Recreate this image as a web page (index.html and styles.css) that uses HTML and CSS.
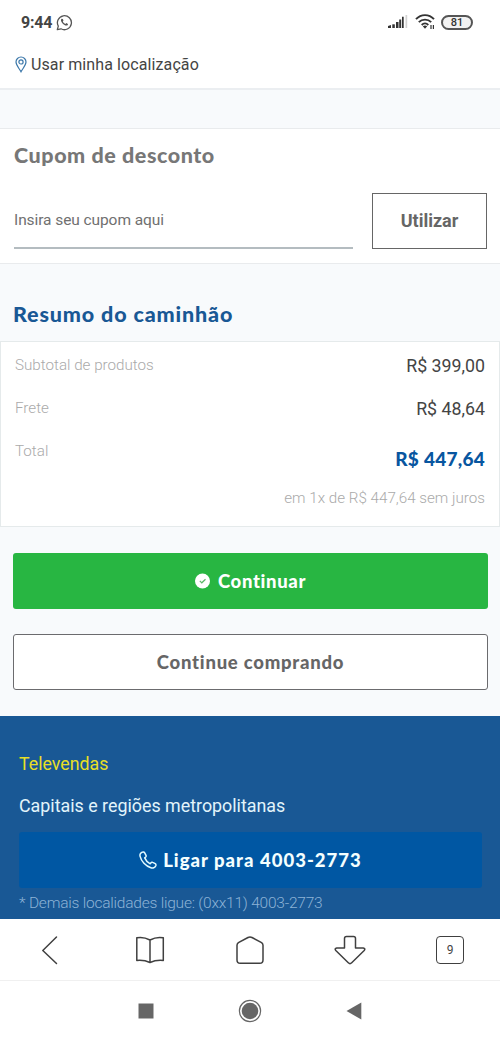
FILE: index.html
```html
<!DOCTYPE html>
<html lang="pt-BR">
<head>
<meta charset="utf-8">
<title>Resumo do caminhão</title>
<link rel="stylesheet" href="styles.css">
</head>
<body>
<div class="screen">
  <header class="status">
    <div class="status-left">
      <span class="clock">9:44</span>
      <svg width="17" height="17" viewBox="0 0 17 17" fill="none" stroke="#555" stroke-width="1.3">
        <path d="M1.3 15.7l1-3.6A7 7 0 1 1 5 14.8z" stroke-linejoin="round"/>
        <path d="M5.6 4.8c-1 .8-.8 2.300.4 3.900 1.500 2 3.800 3.300 5.100 2.700.8-.4 1-1.200.8-1.500l-1.600-.8-.9.9c-1-.3-2.200-1.500-2.600-2.500l.7-.9-.7-1.700z" fill="#555" stroke="none"/>
      </svg>
    </div>
    <div class="status-right">
      <svg class="signal" width="20" height="14" viewBox="0 0 20 14">
        <g fill="#333"><path d="M0 13v-2l3-1v3z"/><path d="M4.300 9.300h2.500V13H4.300z"/><path d="M8 7h2.500v6H8z"/><path d="M11.200 4.500h2V13h-2z"/><path d="M14 1.800h1.700V13H14z"/></g>
        <path d="M17.500 0h1.700v13h-1.700z" fill="#d2d2d2"/>
      </svg>
      <svg class="wifi" width="20" height="16" viewBox="0 0 20 16" fill="none" stroke="#333" stroke-width="1.900">
        <path d="M1 5.200C6-.3 14-.3 19 5.200M3.800 8.200c3.400-3.500 9-3.500 12.400 0M6.700 11c2-2 4.600-2 6.600 0"/>
        <path d="M7.800 12.300q2.200-1.500 4.400 0L10 14.700z" fill="#333" stroke="none"/>
        <path d="M16 11v4M18.400 11v4" stroke-width="1.200"/>
      </svg>
      <span class="battery">81</span>
    </div>
  </header>

  <div class="location">
    <svg width="12" height="17" viewBox="0 0 12 17" fill="none" stroke="#3c78aa" stroke-width="1.200">
      <path d="M6 15.800C4 12 1 9.200 1 6a5 5 0 0 1 10 0c0 3.200-3 6-5 9.800z"/><circle cx="6" cy="5.900" r="2.100"/>
    </svg>
    <span class="location-text">Usar minha localização</span>
  </div>

  <section class="coupon">
    <h2 class="title coupon-title">Cupom de desconto</h2>
    <div class="coupon-form">
      <div class="coupon-field">Insira seu cupom aqui</div>
      <div class="coupon-button">Utilizar</div>
    </div>
  </section>

  <h2 class="title summary-title">Resumo do caminhão</h2>
  <section class="summary">
    <div class="row"><span class="label">Subtotal de produtos</span><span class="value">R$ 399,00</span></div>
    <div class="row"><span class="label">Frete</span><span class="value">R$ 48,64</span></div>
    <div class="row"><span class="label">Total</span><span class="total">R$ 447,64</span></div>
    <div class="row installments"><span class="label">em 1x de R$ 447,64 sem juros</span></div>
  </section>

  <div class="actions">
    <div class="button primary">
      <svg width="15" height="16" viewBox="0 0 15 16"><circle cx="7.500" cy="8" r="7.500" fill="#fff"/><path d="M4.800 7.800l2 2 3.700-3.600" fill="none" stroke="#5cb968" stroke-width="1.200"/></svg>
      <span class="go-text">Continuar</span>
    </div>
    <div class="button secondary"><span class="keep-text">Continue comprando</span></div>
  </div>

  <footer class="televendas">
    <div class="tv-title">Televendas</div>
    <div class="tv-region">Capitais e regiões metropolitanas</div>
    <div class="call">
      <svg width="18" height="18" viewBox="0 0 18 18" fill="none" stroke="#e4fbff" stroke-width="1.500" stroke-linejoin="round">
        <path d="M3.800 1.100C1.500 1.500.6 3.400 1.100 5.400c1.100 4.800 5.600 9.600 10.800 11.300 2.300.7 4.400-.5 5-2.300.2-.8-.1-1.300-.7-1.700l-2.500-1.300c-.7-.4-1.300-.2-1.700.4l-.8 1C8.900 11.600 6.700 9.300 5.700 6.900l1-.9c.5-.5.600-1 .3-1.700L5.700 1.800c-.4-.7-1-.9-1.900-.7z"/>
      </svg>
      <span class="call-text">Ligar para 4003-2773</span>
    </div>
    <div class="tv-note">* Demais localidades ligue: (0xx11) 4003-2773</div>
  </footer>

  <nav class="browser-bar">
    <svg width="30" height="30" viewBox="0 0 30 30"><path d="M21.500 2L7.800 15.500 21.500 28.500"/></svg>
    <svg width="30" height="30" viewBox="0 0 30 30"><path d="M15 5Q8.500 1.500 1.800 2.800V25.500Q9 24.800 15 27.500 21 24.800 28.300 25.500V2.800Q21.500 1.500 15 5zM15 5V27.500"/></svg>
    <svg width="30" height="30" viewBox="0 0 30 30"><path d="M13 2.500L3.400 7.600Q2 8.600 2 10.300V25Q2 28.300 5.200 28.300H24.800Q28 28.300 28 25V10.300Q28 8.600 26.600 7.600L17 2.500Q15 1.400 13 2.500z"/></svg>
    <svg width="32" height="30" viewBox="0 0 32 30"><path d="M12.500 1.500h7q2 0 2 2V13h7.700q2.600.5 1 2.500L17.700 27.800Q16 29.500 14.300 27.800L1.800 15.500q-1.600-2 1-2.500h7.700V3.500q0-2 2-2z"/></svg>
    <span class="tabs">9</span>
  </nav>
  <div class="system-nav">
    <svg width="16" height="16" viewBox="0 0 16 16"><path d="M.5.5h15v15H.5z" fill="#666"/></svg>
    <svg width="24" height="24" viewBox="0 0 24 24"><circle cx="12" cy="12" r="10.600" fill="none" stroke="#666" stroke-width="1.200"/><circle cx="12" cy="12" r="8.300" fill="#666"/></svg>
    <svg width="16" height="18" viewBox="0 0 16 18"><path d="M.5 9L15.300.5v17z" fill="#666"/></svg>
  </div>
</div>
</body>
</html>
```
FILE: styles.css
```css
* { box-sizing: border-box; }
body { margin: 0; font-family: Roboto, sans-serif; color: #444; }
svg { display: block; flex: none; }
span { white-space: nowrap; }
.screen { width: 500px; height: 1041px; background: #f8fafc; overflow: hidden; }
.status { height: 44px; background: #fff; display: flex; justify-content: space-between; padding: 0 27px 0 21px; align-items: center; }
.status-left, .status-right { display: flex; align-items: center; }
.status-left { gap: 4px; }
.clock { font-size: 16px; font-weight: 700; color: #444; letter-spacing: -.2px; }
.signal { margin-right: 7px; }
.wifi { margin-right: 6px; }
.battery { width: 32px; height: 15px; border: 2px solid #555; border-radius: 8px; background: #f2f2f2; font-size: 11px; line-height: 11px; font-weight: 500; color: #333; text-align: center; }
.location { height: 46px; background: #fff; border-bottom: 2px solid #ebeef1; display: flex; align-items: center; gap: 4px; padding: 0 0 3px 15px; }
.location-text { font-size: 16px; letter-spacing: .1px; }
.title { margin: 0; font-family: Lato, sans-serif; font-weight: 900; }
.coupon { margin-top: 38px; height: 136px; background: #fff; border: solid #e9ebed; border-width: 1px 0; padding: 13px 13px 0 14px; }
.coupon-title { font-size: 21.5px; line-height: 26px; letter-spacing: .55px; color: #777; }
.coupon-form { display: flex; justify-content: space-between; margin-top: 25px; }
.coupon-field { width: 339px; height: 56px; border-bottom: 2px solid #b4bcc0; line-height: 54px; font-size: 15.5px; color: #707070; letter-spacing: -.08px; }
.coupon-button { width: 115px; height: 56px; border: 1.500px solid #666; text-align: center; line-height: 54px; font-size: 18px; font-weight: 700; color: #666; }
.summary-title { color: #195895; font-size: 21.5px; line-height: 26px; letter-spacing: .85px; padding: 37px 0 0 13px; height: 77px; }
.summary { height: 186px; background: #fff; border: 1px solid #e5eaeb; padding: 2px 14px; }
.row { display: flex; justify-content: space-between; height: 43px; line-height: 42px; }
.label { font-size: 15.2px; font-weight: 300; color: #aaa; }
.value { font-size: 17.8px; line-height: 44px; color: #444; }
.total { font-family: Lato, sans-serif; font-size: 19px; font-weight: 900; line-height: 58px; letter-spacing: .25px; color: #0856a0; }
.installments { justify-content: flex-end; padding-top: 4px; }
.actions { padding: 26px 12px 26px 13px; display: flex; flex-direction: column; gap: 25px; }
.button { height: 56px; border-radius: 3px; display: flex; align-items: center; justify-content: center; font-family: Lato, sans-serif; font-size: 18.5px; font-weight: 900; }
.primary { background: #28b642; color: #fff; gap: 8px; }
.go-text { letter-spacing: .65px; }
.secondary { background: #fff; border: 1.500px solid #6b6b6e; color: #666; }
.keep-text { letter-spacing: .75px; }
.televendas { height: 203px; background: #195895; padding: 36px 18px 0 19px; }
.tv-title { font-size: 17.800px; line-height: 24px; color: #e8df25; }
.tv-region { font-size: 17.850px; line-height: 24px; margin-top: 18px; color: #e2f4fb; }
.call { height: 56px; margin-top: 14px; border-radius: 3px; background: #0057a3; display: flex; align-items: center; justify-content: center; gap: 6px; font-family: Lato, sans-serif; font-size: 18.5px; font-weight: 900; color: #f4ffff; }
.call-text { letter-spacing: 1.02px; }
.tv-note { margin-top: 4px; line-height: 22px; font-size: 15.500px; letter-spacing: -.22px; font-weight: 300; color: #8db3d5; }
.browser-bar { height: 62px; background: #fff; border-bottom: 1px solid #f0f0f0; display: flex; justify-content: space-between; align-items: center; padding: 0 35px; }
.browser-bar path { fill: none; stroke: #404040; stroke-width: 1.500; stroke-linejoin: round; stroke-linecap: round; }
.tabs { width: 28px; height: 28px; margin-right: 1px; border: 1.500px solid #404040; border-radius: 4px; font-size: 12px; line-height: 26px; text-align: center; color: #444; }
.system-nav { height: 60px; background: #fff; display: flex; justify-content: center; align-items: center; gap: 84px; }
```
